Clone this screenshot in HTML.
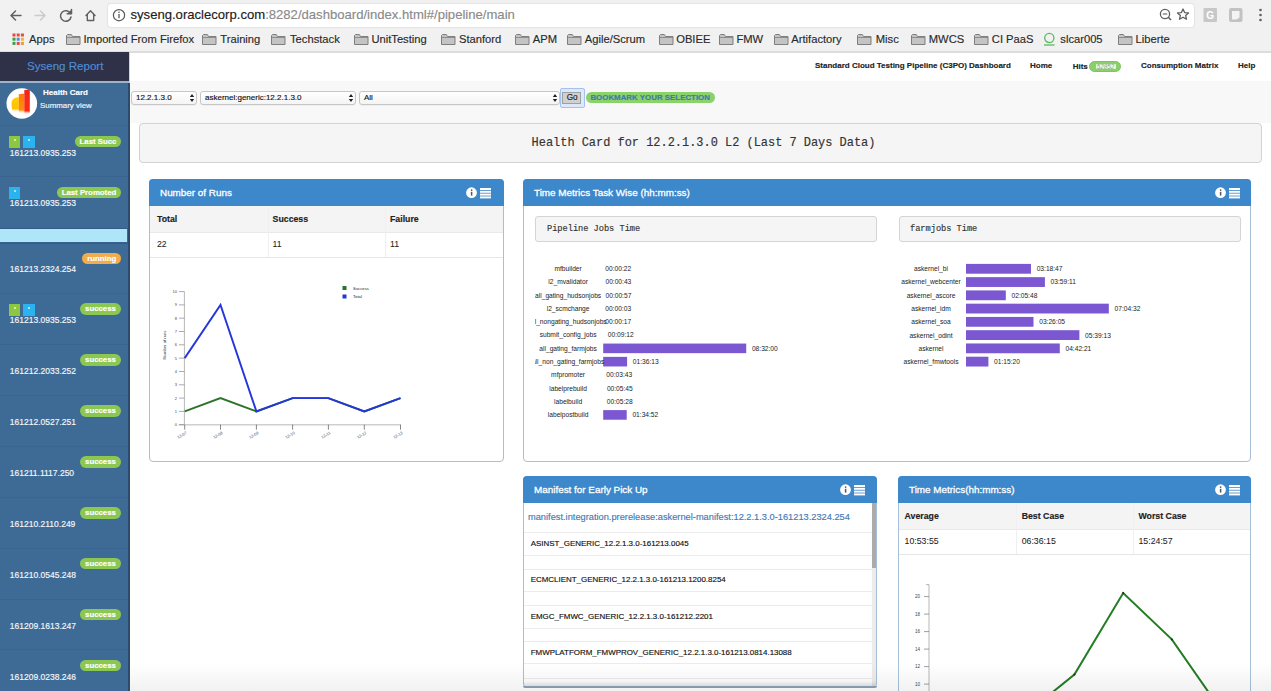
<!DOCTYPE html><html><head><meta charset="utf-8"><style>
*{box-sizing:border-box;margin:0;padding:0}
html,body{width:1271px;height:691px;overflow:hidden;background:#fff;font-family:"Liberation Sans",sans-serif;color:#222}
.a{position:absolute;white-space:nowrap}
.t{position:absolute;white-space:nowrap;line-height:1}
div.a{-webkit-text-stroke:0.15px currentColor}
</style></head><body>
<div class="a" style="left:0px;top:0px;width:1271px;height:51px;background:#f1f1f1"></div>
<div class="a" style="left:0px;top:51px;width:1271px;height:1.7999999999999972px;background:#dcdcdc"></div>
<div class="a" style="left:108px;top:4px;width:1086px;height:23px;background:#fff;border-radius:3px;box-shadow:0 0 0 1px #e4e4e4"></div>
<svg class="a" style="left:0;top:-0.5px" width="130" height="30">
<g fill="none" stroke-linecap="round" stroke-linejoin="round">
<path d="M21 15.5H11M15.5 11L11 15.5L15.5 20" stroke="#616161" stroke-width="1.5"/>
<path d="M35 15.5H45M40.5 11L45 15.5L40.5 20" stroke="#cbcbcb" stroke-width="1.5"/>
<path d="M70.5 13.5A5.3 5.3 0 1 0 71 17" stroke="#616161" stroke-width="1.5"/>
<path d="M71.5 9.5V13.8H67.2" stroke="#616161" stroke-width="1.5" fill="#616161"/>
<path d="M86 15.5L90.5 10.8L95 15.5M87.3 14.2V20.5H93.7V14.2" stroke="#616161" stroke-width="1.4"/>
</g>
<circle cx="119" cy="15.2" r="5.6" fill="none" stroke="#5a5a5a" stroke-width="1.2"/>
<path d="M119 14V18.3" stroke="#5a5a5a" stroke-width="1.3"/><circle cx="119" cy="12.2" r="0.8" fill="#5a5a5a"/>
</svg>
<div class="a" style="left:130.5px;top:7.34px;font-size:13.1px;line-height:15.72px;"><span style="color:#202020">syseng.oraclecorp.com</span><span style="color:#8a8a8a">:8282/dashboard/index.html#/pipeline/main</span></div>
<svg class="a" style="left:1150px;top:0" width="121" height="30">
<circle cx="15" cy="14" r="4.6" fill="none" stroke="#5f5f5f" stroke-width="1.3"/>
<path d="M18.3 17.3L21 20" stroke="#5f5f5f" stroke-width="1.6"/><path d="M12.8 14H17.2" stroke="#5f5f5f" stroke-width="1.1"/>
<path d="M33 9L34.6 12.6L38.5 12.9L35.6 15.4L36.5 19.2L33 17.2L29.5 19.2L30.4 15.4L27.5 12.9L31.4 12.6Z" fill="none" stroke="#5f5f5f" stroke-width="1.3" stroke-linejoin="round"/>
<rect x="53.5" y="8" width="13.5" height="14" fill="#c8c8c8" rx="1"/>
<text x="60.2" y="19" font-size="10" fill="#fff" text-anchor="middle" font-family="Liberation Sans" font-weight="bold">G</text>
<rect x="79" y="8" width="13.5" height="14" fill="#c2c2c2" rx="2"/>
<path d="M82 11H89.5V17.5L86.5 19.5H82Z" fill="#f4f4f4"/>
<circle cx="110.5" cy="10" r="1.3" fill="#5f5f5f"/><circle cx="110.5" cy="15" r="1.3" fill="#5f5f5f"/><circle cx="110.5" cy="20" r="1.3" fill="#5f5f5f"/>
</svg>
<svg class="a" style="left:11px;top:32px" width="16" height="16"><rect x="1.5" y="1.5" width="3" height="3" fill="#e84b3c"/><rect x="5.7" y="1.5" width="3" height="3" fill="#e84b3c"/><rect x="9.9" y="1.5" width="3" height="3" fill="#e84b3c"/><rect x="1.5" y="5.7" width="3" height="3" fill="#3f9d4b"/><rect x="5.7" y="5.7" width="3" height="3" fill="#4a90e2"/><rect x="9.9" y="5.7" width="3" height="3" fill="#f2b533"/><rect x="1.5" y="9.9" width="3" height="3" fill="#3f9d4b"/><rect x="5.7" y="9.9" width="3" height="3" fill="#e84b3c"/><rect x="9.9" y="9.9" width="3" height="3" fill="#f29a33"/></svg>
<div class="a" style="left:29px;top:32.98px;font-size:11.2px;line-height:13.44px;color:#2a2a2a">Apps</div>
<svg class="a" style="left:65.5px;top:33px" width="15" height="13"><path d="M0.5 2.5V11.5H14V3.5H6.5L5.3 1.5H1.5Z" fill="#c4c4c4" stroke="#7f7f7f" stroke-width="1"/><path d="M0.5 4.5H14" stroke="#7f7f7f" stroke-width="0.8"/></svg>
<div class="a" style="left:83.5px;top:32.98px;font-size:11.2px;line-height:13.44px;color:#2a2a2a">Imported From Firefox</div>
<svg class="a" style="left:202px;top:33px" width="15" height="13"><path d="M0.5 2.5V11.5H14V3.5H6.5L5.3 1.5H1.5Z" fill="#c4c4c4" stroke="#7f7f7f" stroke-width="1"/><path d="M0.5 4.5H14" stroke="#7f7f7f" stroke-width="0.8"/></svg>
<div class="a" style="left:220.3px;top:32.98px;font-size:11.2px;line-height:13.44px;color:#2a2a2a">Training</div>
<svg class="a" style="left:271.3px;top:33px" width="15" height="13"><path d="M0.5 2.5V11.5H14V3.5H6.5L5.3 1.5H1.5Z" fill="#c4c4c4" stroke="#7f7f7f" stroke-width="1"/><path d="M0.5 4.5H14" stroke="#7f7f7f" stroke-width="0.8"/></svg>
<div class="a" style="left:290px;top:32.98px;font-size:11.2px;line-height:13.44px;color:#2a2a2a">Techstack</div>
<svg class="a" style="left:353.7px;top:33px" width="15" height="13"><path d="M0.5 2.5V11.5H14V3.5H6.5L5.3 1.5H1.5Z" fill="#c4c4c4" stroke="#7f7f7f" stroke-width="1"/><path d="M0.5 4.5H14" stroke="#7f7f7f" stroke-width="0.8"/></svg>
<div class="a" style="left:371.4px;top:32.98px;font-size:11.2px;line-height:13.44px;color:#2a2a2a">UnitTesting</div>
<svg class="a" style="left:440.7px;top:33px" width="15" height="13"><path d="M0.5 2.5V11.5H14V3.5H6.5L5.3 1.5H1.5Z" fill="#c4c4c4" stroke="#7f7f7f" stroke-width="1"/><path d="M0.5 4.5H14" stroke="#7f7f7f" stroke-width="0.8"/></svg>
<div class="a" style="left:459px;top:32.98px;font-size:11.2px;line-height:13.44px;color:#2a2a2a">Stanford</div>
<svg class="a" style="left:515px;top:33px" width="15" height="13"><path d="M0.5 2.5V11.5H14V3.5H6.5L5.3 1.5H1.5Z" fill="#c4c4c4" stroke="#7f7f7f" stroke-width="1"/><path d="M0.5 4.5H14" stroke="#7f7f7f" stroke-width="0.8"/></svg>
<div class="a" style="left:532.8px;top:32.98px;font-size:11.2px;line-height:13.44px;color:#2a2a2a">APM</div>
<svg class="a" style="left:567px;top:33px" width="15" height="13"><path d="M0.5 2.5V11.5H14V3.5H6.5L5.3 1.5H1.5Z" fill="#c4c4c4" stroke="#7f7f7f" stroke-width="1"/><path d="M0.5 4.5H14" stroke="#7f7f7f" stroke-width="0.8"/></svg>
<div class="a" style="left:584.8px;top:32.98px;font-size:11.2px;line-height:13.44px;color:#2a2a2a">Agile/Scrum</div>
<svg class="a" style="left:658.5px;top:33px" width="15" height="13"><path d="M0.5 2.5V11.5H14V3.5H6.5L5.3 1.5H1.5Z" fill="#c4c4c4" stroke="#7f7f7f" stroke-width="1"/><path d="M0.5 4.5H14" stroke="#7f7f7f" stroke-width="0.8"/></svg>
<div class="a" style="left:676.2px;top:32.98px;font-size:11.2px;line-height:13.44px;color:#2a2a2a">OBIEE</div>
<svg class="a" style="left:718.7px;top:33px" width="15" height="13"><path d="M0.5 2.5V11.5H14V3.5H6.5L5.3 1.5H1.5Z" fill="#c4c4c4" stroke="#7f7f7f" stroke-width="1"/><path d="M0.5 4.5H14" stroke="#7f7f7f" stroke-width="0.8"/></svg>
<div class="a" style="left:736.4px;top:32.98px;font-size:11.2px;line-height:13.44px;color:#2a2a2a">FMW</div>
<svg class="a" style="left:773.6px;top:33px" width="15" height="13"><path d="M0.5 2.5V11.5H14V3.5H6.5L5.3 1.5H1.5Z" fill="#c4c4c4" stroke="#7f7f7f" stroke-width="1"/><path d="M0.5 4.5H14" stroke="#7f7f7f" stroke-width="0.8"/></svg>
<div class="a" style="left:791.3px;top:32.98px;font-size:11.2px;line-height:13.44px;color:#2a2a2a">Artifactory</div>
<svg class="a" style="left:857.3px;top:33px" width="15" height="13"><path d="M0.5 2.5V11.5H14V3.5H6.5L5.3 1.5H1.5Z" fill="#c4c4c4" stroke="#7f7f7f" stroke-width="1"/><path d="M0.5 4.5H14" stroke="#7f7f7f" stroke-width="0.8"/></svg>
<div class="a" style="left:875.8px;top:32.98px;font-size:11.2px;line-height:13.44px;color:#2a2a2a">Misc</div>
<svg class="a" style="left:911.3px;top:33px" width="15" height="13"><path d="M0.5 2.5V11.5H14V3.5H6.5L5.3 1.5H1.5Z" fill="#c4c4c4" stroke="#7f7f7f" stroke-width="1"/><path d="M0.5 4.5H14" stroke="#7f7f7f" stroke-width="0.8"/></svg>
<div class="a" style="left:928.8px;top:32.98px;font-size:11.2px;line-height:13.44px;color:#2a2a2a">MWCS</div>
<svg class="a" style="left:974.2px;top:33px" width="15" height="13"><path d="M0.5 2.5V11.5H14V3.5H6.5L5.3 1.5H1.5Z" fill="#c4c4c4" stroke="#7f7f7f" stroke-width="1"/><path d="M0.5 4.5H14" stroke="#7f7f7f" stroke-width="0.8"/></svg>
<div class="a" style="left:991.8px;top:32.98px;font-size:11.2px;line-height:13.44px;color:#2a2a2a">CI PaaS</div>
<svg class="a" style="left:1117.6px;top:33px" width="15" height="13"><path d="M0.5 2.5V11.5H14V3.5H6.5L5.3 1.5H1.5Z" fill="#c4c4c4" stroke="#7f7f7f" stroke-width="1"/><path d="M0.5 4.5H14" stroke="#7f7f7f" stroke-width="0.8"/></svg>
<div class="a" style="left:1135.5px;top:32.98px;font-size:11.2px;line-height:13.44px;color:#2a2a2a">Liberte</div>
<svg class="a" style="left:1043px;top:32px" width="13" height="15"><circle cx="6.3" cy="6" r="4.6" fill="none" stroke="#59b960" stroke-width="1.3"/><path d="M1 13H11.5" stroke="#59b960" stroke-width="1.3"/></svg>
<div class="a" style="left:1060.3px;top:32.98px;font-size:11.2px;line-height:13.44px;color:#2a2a2a">slcar005</div>
<div class="a" style="left:0px;top:52px;width:129px;height:639px;background:#3e6b95"></div>
<div class="a" style="left:128px;top:83px;width:2px;height:608px;background:#2d4b6c"></div>
<div class="a" style="left:129px;top:52px;width:1px;height:31px;background:#d4d4d4"></div>
<div class="a" style="left:0px;top:52px;width:129px;height:29px;background:#2e3148"></div>
<div class="a" style="left:0px;top:81px;width:129px;height:2px;background:#9db4cb"></div>
<div class="a" style="left:-234.8px;width:600px;text-align:center;top:60.07px;font-size:11.55px;line-height:13.86px;color:#4d8ed6">Syseng Report</div>
<svg class="a" style="left:0px;top:84px" width="44" height="40">
<defs>
<linearGradient id="fy" x1="0" y1="0" x2="0" y2="1"><stop offset="0" stop-color="#ffd000"/><stop offset="0.75" stop-color="#ffc000"/><stop offset="1" stop-color="#fff" stop-opacity="0"/></linearGradient>
<linearGradient id="fo" x1="0" y1="0" x2="0" y2="1"><stop offset="0" stop-color="#ff7a10"/><stop offset="0.8" stop-color="#ff8a10"/><stop offset="1" stop-color="#fff" stop-opacity="0"/></linearGradient>
<linearGradient id="fr" x1="0" y1="0" x2="0" y2="1"><stop offset="0" stop-color="#f02818"/><stop offset="0.85" stop-color="#ff2a10"/><stop offset="1" stop-color="#fff" stop-opacity="0"/></linearGradient>
<filter id="bl"><feGaussianBlur stdDeviation="0.6"/></filter>
</defs>
<circle cx="21.8" cy="103.5" r="15.3" transform="translate(0,-84)" fill="#fff"/>
<g filter="url(#bl)">
<path d="M11.6 18C12.3 15.5 14.5 13.3 18.8 13.3V28.5H13C11.8 25 11.3 21 11.6 18Z" fill="url(#fy)"/>
<path d="M18.8 10.2L24.3 9.5V30H18.8Z" fill="url(#fo)"/>
<path d="M24.3 6L29.8 5.2V30.5L24.3 30.8Z" fill="url(#fr)"/>
</g>
</svg>
<div class="a" style="left:43px;top:88.00px;font-size:8px;line-height:9.60px;color:#fff;font-weight:bold">Health Card</div>
<div class="a" style="left:40px;top:100.66px;font-size:7.9px;line-height:9.48px;color:#f2f6fb">Summary view</div>
<div class="a" style="left:0px;top:125.4px;width:128px;height:1.0px;background:#38648f"></div>
<div class="a" style="left:74.9px;top:135.7px;width:46.3px;height:11.6px;border-radius:6px;background:#8cc751;color:#fff;font-size:7.8px;font-weight:bold;line-height:11.6px;text-align:center">Last Succ</div>
<div class="a" style="left:9px;top:136.2px;width:11.3px;height:12px;background:#8dc63f"><div style="position:absolute;left:4.5px;top:3px;width:2px;height:2px;background:rgba(255,255,255,.8);border-radius:1px"></div></div>
<div class="a" style="left:23.3px;top:136.2px;width:11.3px;height:12px;background:#2ab3ef"><div style="position:absolute;left:4.5px;top:3px;width:2px;height:2px;background:rgba(255,255,255,.8);border-radius:1px"></div></div>
<div class="a" style="left:9.8px;top:147.50px;font-size:8.5px;line-height:10.20px;color:#f4f7fb">161213.0935.253</div>
<div class="a" style="left:0px;top:176.29999999999998px;width:128px;height:1.0px;background:#38648f"></div>
<div class="a" style="left:56.8px;top:186.6px;width:64.4px;height:11.6px;border-radius:6px;background:#8cc751;color:#fff;font-size:7.8px;font-weight:bold;line-height:11.6px;text-align:center">Last Promoted</div>
<div class="a" style="left:9px;top:187.1px;width:11.3px;height:12px;background:#2ab3ef"><div style="position:absolute;left:4.5px;top:3px;width:2px;height:2px;background:rgba(255,255,255,.8);border-radius:1px"></div></div>
<div class="a" style="left:9.8px;top:198.40px;font-size:8.5px;line-height:10.20px;color:#f4f7fb">161213.0935.253</div>
<div class="a" style="left:0px;top:227.7px;width:128px;height:1.0px;background:#325c88"></div>
<div class="a" style="left:0px;top:228.7px;width:127px;height:14.0px;background:#aee5f9"></div>
<div class="a" style="left:0px;top:242.7px;width:128px;height:1.0px;background:#325c88"></div>
<div class="a" style="left:0px;top:242.2px;width:128px;height:1.0px;background:#38648f"></div>
<div class="a" style="left:82.3px;top:252.5px;width:38.9px;height:11.6px;border-radius:6px;background:#f0ad4e;color:#fff;font-size:7.8px;font-weight:bold;line-height:11.6px;text-align:center">running</div>
<div class="a" style="left:9.8px;top:264.30px;font-size:8.5px;line-height:10.20px;color:#f4f7fb">161213.2324.254</div>
<div class="a" style="left:0px;top:293.09999999999997px;width:128px;height:1.0px;background:#38648f"></div>
<div class="a" style="left:79.8px;top:303.4px;width:41.4px;height:11.6px;border-radius:6px;background:#8cc751;color:#fff;font-size:7.8px;font-weight:bold;line-height:11.6px;text-align:center">success</div>
<div class="a" style="left:9px;top:303.9px;width:11.3px;height:12px;background:#8dc63f"><div style="position:absolute;left:4.5px;top:3px;width:2px;height:2px;background:rgba(255,255,255,.8);border-radius:1px"></div></div>
<div class="a" style="left:23.3px;top:303.9px;width:11.3px;height:12px;background:#2ab3ef"><div style="position:absolute;left:4.5px;top:3px;width:2px;height:2px;background:rgba(255,255,255,.8);border-radius:1px"></div></div>
<div class="a" style="left:9.8px;top:315.20px;font-size:8.5px;line-height:10.20px;color:#f4f7fb">161213.0935.253</div>
<div class="a" style="left:0px;top:343.99999999999994px;width:128px;height:1.0px;background:#38648f"></div>
<div class="a" style="left:79.8px;top:354.3px;width:41.4px;height:11.6px;border-radius:6px;background:#8cc751;color:#fff;font-size:7.8px;font-weight:bold;line-height:11.6px;text-align:center">success</div>
<div class="a" style="left:9.8px;top:366.10px;font-size:8.5px;line-height:10.20px;color:#f4f7fb">161212.2033.252</div>
<div class="a" style="left:0px;top:394.8999999999999px;width:128px;height:1.0px;background:#38648f"></div>
<div class="a" style="left:79.8px;top:405.2px;width:41.4px;height:11.6px;border-radius:6px;background:#8cc751;color:#fff;font-size:7.8px;font-weight:bold;line-height:11.6px;text-align:center">success</div>
<div class="a" style="left:9.8px;top:417.00px;font-size:8.5px;line-height:10.20px;color:#f4f7fb">161212.0527.251</div>
<div class="a" style="left:0px;top:445.7999999999999px;width:128px;height:1.0px;background:#38648f"></div>
<div class="a" style="left:79.8px;top:456.1px;width:41.4px;height:11.6px;border-radius:6px;background:#8cc751;color:#fff;font-size:7.8px;font-weight:bold;line-height:11.6px;text-align:center">success</div>
<div class="a" style="left:9.8px;top:467.90px;font-size:8.5px;line-height:10.20px;color:#f4f7fb">161211.1117.250</div>
<div class="a" style="left:0px;top:496.6999999999999px;width:128px;height:1.0px;background:#38648f"></div>
<div class="a" style="left:79.8px;top:507.0px;width:41.4px;height:11.6px;border-radius:6px;background:#8cc751;color:#fff;font-size:7.8px;font-weight:bold;line-height:11.6px;text-align:center">success</div>
<div class="a" style="left:9.8px;top:518.80px;font-size:8.5px;line-height:10.20px;color:#f4f7fb">161210.2110.249</div>
<div class="a" style="left:0px;top:547.5999999999999px;width:128px;height:1.0px;background:#38648f"></div>
<div class="a" style="left:79.8px;top:557.9px;width:41.4px;height:11.6px;border-radius:6px;background:#8cc751;color:#fff;font-size:7.8px;font-weight:bold;line-height:11.6px;text-align:center">success</div>
<div class="a" style="left:9.8px;top:569.70px;font-size:8.5px;line-height:10.20px;color:#f4f7fb">161210.0545.248</div>
<div class="a" style="left:0px;top:598.4999999999999px;width:128px;height:1.0px;background:#38648f"></div>
<div class="a" style="left:79.8px;top:608.8px;width:41.4px;height:11.6px;border-radius:6px;background:#8cc751;color:#fff;font-size:7.8px;font-weight:bold;line-height:11.6px;text-align:center">success</div>
<div class="a" style="left:9.8px;top:620.60px;font-size:8.5px;line-height:10.20px;color:#f4f7fb">161209.1613.247</div>
<div class="a" style="left:0px;top:649.3999999999999px;width:128px;height:1.0px;background:#38648f"></div>
<div class="a" style="left:79.8px;top:659.7px;width:41.4px;height:11.6px;border-radius:6px;background:#8cc751;color:#fff;font-size:7.8px;font-weight:bold;line-height:11.6px;text-align:center">success</div>
<div class="a" style="left:9.8px;top:671.50px;font-size:8.5px;line-height:10.20px;color:#f4f7fb">161209.0238.246</div>
<div class="a" style="left:815px;top:61.00px;font-size:8px;line-height:9.60px;font-weight:bold;color:#222">Standard Cloud Testing Pipeline (C3PO) Dashboard</div>
<div class="a" style="left:1030px;top:61.00px;font-size:8px;line-height:9.60px;font-weight:bold;color:#222">Home</div>
<div class="a" style="left:1072.7px;top:61.50px;font-size:8px;line-height:9.60px;font-weight:bold;color:#222">Hits</div>
<div class="a" style="left:1089.3px;top:61.1px;width:31.5px;height:11.3px;border-radius:6px;background:#8ad06a;border:1px solid #7cc65a"></div>
<div class="a" style="left:1095.7px;top:63.8px;width:19.9px;height:5.2px;background:#e6f9dc;border-radius:1px"></div>
<div class="a" style="left:805.5999999999999px;width:600px;text-align:center;top:62.62px;font-size:6.3px;line-height:7.56px;color:#8aa882;font-style:italic;-webkit-text-stroke:0">52852</div>
<div class="a" style="left:1141px;top:61.00px;font-size:8px;line-height:9.60px;font-weight:bold;color:#222">Consumption Matrix</div>
<div class="a" style="left:1238px;top:61.00px;font-size:8px;line-height:9.60px;font-weight:bold;color:#222">Help</div>
<div class="a" style="left:130px;top:81px;width:1141px;height:42px;background:#f8f8f8"></div>
<div class="a" style="left:131px;top:91px;width:66px;height:13.5px;border:1px solid #c6c6c6;border-radius:3px;background:linear-gradient(#fff,#f4f4f4);box-shadow:0 0.5px 0 rgba(0,0,0,.08)"></div>
<div class="a" style="left:136px;top:93.00px;font-size:8px;line-height:9.60px;color:#111">12.2.1.3.0</div>
<svg class="a" style="left:189px;top:92px" width="6" height="12"><path d="M0.8 5L3 2L5.2 5Z M0.8 7L3 10L5.2 7Z" fill="#222"/></svg>
<div class="a" style="left:200px;top:91px;width:156px;height:13.5px;border:1px solid #c6c6c6;border-radius:3px;background:linear-gradient(#fff,#f4f4f4);box-shadow:0 0.5px 0 rgba(0,0,0,.08)"></div>
<div class="a" style="left:205px;top:93.00px;font-size:8px;line-height:9.60px;color:#111">askernel:generic:12.2.1.3.0</div>
<svg class="a" style="left:348px;top:92px" width="6" height="12"><path d="M0.8 5L3 2L5.2 5Z M0.8 7L3 10L5.2 7Z" fill="#222"/></svg>
<div class="a" style="left:359px;top:91px;width:201px;height:13.5px;border:1px solid #c6c6c6;border-radius:3px;background:linear-gradient(#fff,#f4f4f4);box-shadow:0 0.5px 0 rgba(0,0,0,.08)"></div>
<div class="a" style="left:364px;top:93.00px;font-size:8px;line-height:9.60px;color:#111">All</div>
<svg class="a" style="left:552px;top:92px" width="6" height="12"><path d="M0.8 5L3 2L5.2 5Z M0.8 7L3 10L5.2 7Z" fill="#222"/></svg>
<div class="a" style="left:559.7px;top:88.3px;width:24.899999999999977px;height:19.299999999999997px;background:#dde8f8;border:1.4px solid #a6c0f0;border-radius:2px"></div>
<div class="a" style="left:561.7px;top:91.6px;width:19.8px;height:12.8px;background:#d2cfcf;border:1px solid #99a3a3"></div>
<div class="a" style="left:272.1px;width:600px;text-align:center;top:92.68px;font-size:8.2px;line-height:9.84px;color:#222">Go</div>
<div class="a" style="left:585.6px;top:91.8px;width:129px;height:11.5px;border-radius:6px;background:#8ad26a"></div>
<div class="a" style="left:350.20000000000005px;width:600px;text-align:center;top:92.86px;font-size:7.9px;line-height:9.48px;color:#3f7aa8;font-weight:bold">BOOKMARK YOUR SELECTION</div>
<div class="a" style="left:139px;top:123px;width:1123px;height:40px;background:#f5f5f5;border:1px solid #d2d2d2;border-radius:4px"></div>
<div class="a" style="left:403.5px;width:600px;text-align:center;top:135.63px;font-size:11.95px;line-height:14.34px;font-family:'Liberation Mono',monospace;color:#333">Health Card for 12.2.1.3.0 L2 (Last 7 Days Data)</div>
<div class="a" style="left:149px;top:179px;width:354.5px;height:283px;border:1px solid #a8bfd9;border-radius:4px;background:#fff"></div>
<div class="a" style="left:149px;top:179px;width:354.5px;height:26.5px;background:#3d87cb;border-radius:4px 4px 0 0"></div>
<div class="a" style="left:160px;top:186.66px;font-size:9.9px;line-height:11.88px;color:#fff;-webkit-text-stroke:0.3px #fff">Number of Runs</div>
<svg class="a" style="left:466px;top:187px" width="26" height="12">
<circle cx="5.5" cy="5.7" r="5.4" fill="#fff"/>
<path d="M5.6 4.8V8.6" stroke="#555" stroke-width="1.5"/><circle cx="5.6" cy="3.1" r="0.85" fill="#555"/>
<rect x="14" y="1" width="11" height="2" fill="#fff"/><rect x="14" y="3.8" width="11" height="2" fill="#fff"/>
<rect x="14" y="6.6" width="11" height="2" fill="#fff"/><rect x="14" y="9.4" width="11" height="2" fill="#fff"/>
</svg>
<div class="a" style="left:523px;top:179px;width:728px;height:283px;border:1px solid #a8bfd9;border-radius:4px;background:#fff"></div>
<div class="a" style="left:523px;top:179px;width:728px;height:26.5px;background:#3d87cb;border-radius:4px 4px 0 0"></div>
<div class="a" style="left:534px;top:186.66px;font-size:9.9px;line-height:11.88px;color:#fff;-webkit-text-stroke:0.3px #fff">Time Metrics Task Wise (hh:mm:ss)</div>
<svg class="a" style="left:1215px;top:187px" width="26" height="12">
<circle cx="5.5" cy="5.7" r="5.4" fill="#fff"/>
<path d="M5.6 4.8V8.6" stroke="#555" stroke-width="1.5"/><circle cx="5.6" cy="3.1" r="0.85" fill="#555"/>
<rect x="14" y="1" width="11" height="2" fill="#fff"/><rect x="14" y="3.8" width="11" height="2" fill="#fff"/>
<rect x="14" y="6.6" width="11" height="2" fill="#fff"/><rect x="14" y="9.4" width="11" height="2" fill="#fff"/>
</svg>
<div class="a" style="left:523px;top:476px;width:354px;height:212px;border:1px solid #a8bfd9;border-radius:4px;background:#fff"></div>
<div class="a" style="left:523px;top:476px;width:354px;height:26.5px;background:#3d87cb;border-radius:4px 4px 0 0"></div>
<div class="a" style="left:534px;top:483.66px;font-size:9.9px;line-height:11.88px;color:#fff;-webkit-text-stroke:0.3px #fff">Manifest for Early Pick Up</div>
<svg class="a" style="left:840.3px;top:484px" width="26" height="12">
<circle cx="5.5" cy="5.7" r="5.4" fill="#fff"/>
<path d="M5.6 4.8V8.6" stroke="#555" stroke-width="1.5"/><circle cx="5.6" cy="3.1" r="0.85" fill="#555"/>
<rect x="14" y="1" width="11" height="2" fill="#fff"/><rect x="14" y="3.8" width="11" height="2" fill="#fff"/>
<rect x="14" y="6.6" width="11" height="2" fill="#fff"/><rect x="14" y="9.4" width="11" height="2" fill="#fff"/>
</svg>
<div class="a" style="left:898px;top:476px;width:353px;height:244px;border:1px solid #a8bfd9;border-radius:4px;background:#fff"></div>
<div class="a" style="left:898px;top:476px;width:353px;height:26.5px;background:#3d87cb;border-radius:4px 4px 0 0"></div>
<div class="a" style="left:909px;top:483.66px;font-size:9.9px;line-height:11.88px;color:#fff;-webkit-text-stroke:0.3px #fff">Time Metrics(hh:mm:ss)</div>
<svg class="a" style="left:1215.4px;top:484px" width="26" height="12">
<circle cx="5.5" cy="5.7" r="5.4" fill="#fff"/>
<path d="M5.6 4.8V8.6" stroke="#555" stroke-width="1.5"/><circle cx="5.6" cy="3.1" r="0.85" fill="#555"/>
<rect x="14" y="1" width="11" height="2" fill="#fff"/><rect x="14" y="3.8" width="11" height="2" fill="#fff"/>
<rect x="14" y="6.6" width="11" height="2" fill="#fff"/><rect x="14" y="9.4" width="11" height="2" fill="#fff"/>
</svg>
<div class="a" style="left:150px;top:205.5px;width:352.5px;height:26.19999999999999px;background:#f4f4f4"></div>
<div class="a" style="left:150px;top:231.7px;width:352.5px;height:1.0px;background:#e9e9e9"></div>
<div class="a" style="left:150px;top:256.5px;width:352.5px;height:1.1999999999999886px;background:#e6e6e6"></div>
<div class="a" style="left:267.5px;top:205.5px;width:1.0px;height:51.0px;background:#f0f0f0"></div>
<div class="a" style="left:384.5px;top:205.5px;width:1.0px;height:51.0px;background:#f0f0f0"></div>
<div class="a" style="left:157px;top:213.55px;font-size:8.75px;line-height:10.50px;font-weight:bold;color:#222">Total</div>
<div class="a" style="left:157px;top:239.05px;font-size:8.75px;line-height:10.50px;color:#222;-webkit-text-stroke:0.05px #222">22</div>
<div class="a" style="left:272.6px;top:213.55px;font-size:8.75px;line-height:10.50px;font-weight:bold;color:#222">Success</div>
<div class="a" style="left:272.6px;top:239.05px;font-size:8.75px;line-height:10.50px;color:#222;-webkit-text-stroke:0.05px #222">11</div>
<div class="a" style="left:390px;top:213.55px;font-size:8.75px;line-height:10.50px;font-weight:bold;color:#222">Failure</div>
<div class="a" style="left:390px;top:239.05px;font-size:8.75px;line-height:10.50px;color:#222;-webkit-text-stroke:0.05px #222">11</div>
<div class="a" style="left:899px;top:502.6px;width:351px;height:26.200000000000045px;background:#f4f4f4"></div>
<div class="a" style="left:899px;top:528.8000000000001px;width:351px;height:1.0px;background:#e9e9e9"></div>
<div class="a" style="left:899px;top:553.6px;width:351px;height:1.2000000000000455px;background:#e6e6e6"></div>
<div class="a" style="left:1015.8px;top:502.6px;width:1.0px;height:51.0px;background:#f0f0f0"></div>
<div class="a" style="left:1132.6px;top:502.6px;width:1.0px;height:51.0px;background:#f0f0f0"></div>
<div class="a" style="left:904.6px;top:510.65px;font-size:8.75px;line-height:10.50px;font-weight:bold;color:#222">Average</div>
<div class="a" style="left:904.6px;top:536.15px;font-size:8.75px;line-height:10.50px;color:#222;-webkit-text-stroke:0.05px #222">10:53:55</div>
<div class="a" style="left:1021.7px;top:510.65px;font-size:8.75px;line-height:10.50px;font-weight:bold;color:#222">Best Case</div>
<div class="a" style="left:1021.7px;top:536.15px;font-size:8.75px;line-height:10.50px;color:#222;-webkit-text-stroke:0.05px #222">06:36:15</div>
<div class="a" style="left:1138.5px;top:510.65px;font-size:8.75px;line-height:10.50px;font-weight:bold;color:#222">Worst Case</div>
<div class="a" style="left:1138.5px;top:536.15px;font-size:8.75px;line-height:10.50px;color:#222;-webkit-text-stroke:0.05px #222">15:24:57</div>
<svg class="a" style="left:149px;top:260px" width="354" height="200" font-family="Liberation Sans"><path d="M35.400000000000006 31.600000000000023V164.7" fill="none" stroke="#999" stroke-width="0.7"/><path d="M29.900000000000006 164.7H251.8" fill="none" stroke="#cfcfcf" stroke-width="1.4"/><path d="M29.900000000000006 164.7H35.400000000000006" stroke="#888" stroke-width="0.7"/><text x="27.900000000000006" y="166.2" font-size="4" fill="#444" text-anchor="end">0</text><path d="M29.900000000000006 151.4H35.400000000000006" stroke="#888" stroke-width="0.7"/><text x="27.900000000000006" y="152.9" font-size="4" fill="#444" text-anchor="end">1</text><path d="M29.900000000000006 138.1H35.400000000000006" stroke="#888" stroke-width="0.7"/><text x="27.900000000000006" y="139.6" font-size="4" fill="#444" text-anchor="end">2</text><path d="M29.900000000000006 124.8H35.400000000000006" stroke="#888" stroke-width="0.7"/><text x="27.900000000000006" y="126.3" font-size="4" fill="#444" text-anchor="end">3</text><path d="M29.900000000000006 111.5H35.400000000000006" stroke="#888" stroke-width="0.7"/><text x="27.900000000000006" y="113.0" font-size="4" fill="#444" text-anchor="end">4</text><path d="M29.900000000000006 98.1H35.400000000000006" stroke="#888" stroke-width="0.7"/><text x="27.900000000000006" y="99.6" font-size="4" fill="#444" text-anchor="end">5</text><path d="M29.900000000000006 84.8H35.400000000000006" stroke="#888" stroke-width="0.7"/><text x="27.900000000000006" y="86.3" font-size="4" fill="#444" text-anchor="end">6</text><path d="M29.900000000000006 71.5H35.400000000000006" stroke="#888" stroke-width="0.7"/><text x="27.900000000000006" y="73.0" font-size="4" fill="#444" text-anchor="end">7</text><path d="M29.900000000000006 58.2H35.400000000000006" stroke="#888" stroke-width="0.7"/><text x="27.900000000000006" y="59.7" font-size="4" fill="#444" text-anchor="end">8</text><path d="M29.900000000000006 44.9H35.400000000000006" stroke="#888" stroke-width="0.7"/><text x="27.900000000000006" y="46.4" font-size="4" fill="#444" text-anchor="end">9</text><path d="M29.900000000000006 31.6H35.400000000000006" stroke="#888" stroke-width="0.7"/><text x="27.900000000000006" y="33.1" font-size="4" fill="#444" text-anchor="end">10</text><path d="M35.7 164.7V169.7" stroke="#555" stroke-width="0.7"/><text transform="translate(38.2,173.7) rotate(-30)" font-size="4" fill="#555" text-anchor="end">12-07</text><path d="M71.5 164.7V169.7" stroke="#555" stroke-width="0.7"/><text transform="translate(74.0,173.7) rotate(-30)" font-size="4" fill="#555" text-anchor="end">12-08</text><path d="M107.4 164.7V169.7" stroke="#555" stroke-width="0.7"/><text transform="translate(109.9,173.7) rotate(-30)" font-size="4" fill="#555" text-anchor="end">12-09</text><path d="M143.6 164.7V169.7" stroke="#555" stroke-width="0.7"/><text transform="translate(146.1,173.7) rotate(-30)" font-size="4" fill="#555" text-anchor="end">12-10</text><path d="M179.4 164.7V169.7" stroke="#555" stroke-width="0.7"/><text transform="translate(181.9,173.7) rotate(-30)" font-size="4" fill="#555" text-anchor="end">12-11</text><path d="M215.3 164.7V169.7" stroke="#555" stroke-width="0.7"/><text transform="translate(217.8,173.7) rotate(-30)" font-size="4" fill="#555" text-anchor="end">12-12</text><path d="M251.5 164.7V169.7" stroke="#555" stroke-width="0.7"/><text transform="translate(254.0,173.7) rotate(-30)" font-size="4" fill="#555" text-anchor="end">12-13</text><text transform="translate(16.5,85) rotate(-90)" font-size="4.2" fill="#333" text-anchor="middle">Number of runs</text><polyline points="35.7,151.4 71.5,138.1 107.4,151.4 143.6,138.1 179.4,138.1 215.3,151.4 251.5,138.1" fill="none" stroke="#2b742b" stroke-width="1.9"/><polyline points="35.7,98.1 71.5,44.9 107.4,151.4 143.6,138.1 179.4,138.1 215.3,151.4 251.5,138.1" fill="none" stroke="#2536dc" stroke-width="1.9"/><rect x="193.5" y="26" width="4" height="4" fill="#2b742b"/><text x="204" y="29.600000000000023" font-size="4.2" fill="#222">Success</text><rect x="193.5" y="34.5" width="4" height="4" fill="#2536dc"/><text x="204" y="38" font-size="4.2" fill="#222">Total</text></svg>
<div class="a" style="left:535px;top:216px;width:342px;height:25.5px;background:#f5f5f5;border:1px solid #d4d4d4;border-radius:3px"></div>
<div class="a" style="left:547px;top:224.11px;font-size:8.65px;line-height:10.38px;font-family:'Liberation Mono',monospace;color:#333">Pipeline Jobs Time</div>
<div class="a" style="left:898.5px;top:216px;width:342.0999999999999px;height:25.5px;background:#f5f5f5;border:1px solid #d4d4d4;border-radius:3px"></div>
<div class="a" style="left:910px;top:224.31px;font-size:8.65px;line-height:10.38px;font-family:'Liberation Mono',monospace;color:#333">farmjobs Time</div>
<svg class="a" style="left:534.5px;top:255px" width="300" height="175" font-family="Liberation Sans"><text x="33.10" y="15.90" font-size="6.65" fill="#222" text-anchor="middle">mfbuilder</text><text x="70.34" y="15.90" font-size="6.65" fill="#222">00:00:22</text><text x="33.10" y="29.21" font-size="6.65" fill="#222" text-anchor="middle">l2_mvalidator</text><text x="70.44" y="29.21" font-size="6.65" fill="#222">00:00:43</text><text x="33.10" y="42.52" font-size="6.65" fill="#222" text-anchor="middle">all_gating_hudsonjobs</text><text x="70.50" y="42.52" font-size="6.65" fill="#222">00:00:57</text><text x="33.10" y="55.83" font-size="6.65" fill="#222" text-anchor="middle">l2_scmchange</text><text x="70.24" y="55.83" font-size="6.65" fill="#222">00:00:03</text><text x="33.10" y="69.14" font-size="6.65" fill="#222" text-anchor="middle">all_nongating_hudsonjobs</text><text x="70.31" y="69.14" font-size="6.65" fill="#222">00:00:17</text><text x="33.10" y="82.45" font-size="6.65" fill="#222" text-anchor="middle">submit_config_jobs</text><text x="72.87" y="82.45" font-size="6.65" fill="#222">00:09:12</text><rect x="68.20" y="88.56" width="143.02" height="9.6" fill="#7b57d1"/><text x="33.10" y="95.76" font-size="6.65" fill="#222" text-anchor="middle">all_gating_farmjobs</text><text x="216.92" y="95.76" font-size="6.65" fill="#222">08:32:00</text><rect x="68.20" y="101.87" width="23.90" height="9.6" fill="#7b57d1"/><text x="33.10" y="109.07" font-size="6.65" fill="#222" text-anchor="middle">all_non_gating_farmjobs</text><text x="97.80" y="109.07" font-size="6.65" fill="#222">01:36:13</text><text x="33.10" y="122.38" font-size="6.65" fill="#222" text-anchor="middle">mfpromoter</text><text x="71.29" y="122.38" font-size="6.65" fill="#222">00:03:43</text><text x="33.10" y="135.69" font-size="6.65" fill="#222" text-anchor="middle">labelprebuild</text><text x="71.88" y="135.69" font-size="6.65" fill="#222">00:05:45</text><text x="33.10" y="149.00" font-size="6.65" fill="#222" text-anchor="middle">labelbuild</text><text x="71.80" y="149.00" font-size="6.65" fill="#222">00:05:28</text><rect x="68.20" y="155.11" width="23.51" height="9.6" fill="#7b57d1"/><text x="33.10" y="162.31" font-size="6.65" fill="#222" text-anchor="middle">labelpostbuild</text><text x="97.41" y="162.31" font-size="6.65" fill="#222">01:34:52</text></svg>
<svg class="a" style="left:890px;top:255px" width="300" height="120" font-family="Liberation Sans"><rect x="76.00" y="8.90" width="64.97" height="9.8" fill="#7b57d1"/><text x="41.00" y="16.20" font-size="6.65" fill="#222" text-anchor="middle">askernel_bi</text><text x="146.67" y="16.20" font-size="6.65" fill="#222">03:18:47</text><rect x="76.00" y="22.16" width="78.90" height="9.8" fill="#7b57d1"/><text x="41.00" y="29.46" font-size="6.65" fill="#222" text-anchor="middle">askernel_webcenter</text><text x="160.60" y="29.46" font-size="6.65" fill="#222">03:59:11</text><rect x="76.00" y="35.42" width="39.81" height="9.8" fill="#7b57d1"/><text x="41.00" y="42.72" font-size="6.65" fill="#222" text-anchor="middle">askernel_ascore</text><text x="121.51" y="42.72" font-size="6.65" fill="#222">02:05:48</text><rect x="76.00" y="48.68" width="142.81" height="9.8" fill="#7b57d1"/><text x="41.00" y="55.98" font-size="6.65" fill="#222" text-anchor="middle">askernel_idm</text><text x="224.51" y="55.98" font-size="6.65" fill="#222">07:04:32</text><rect x="76.00" y="61.94" width="67.49" height="9.8" fill="#7b57d1"/><text x="41.00" y="69.24" font-size="6.65" fill="#222" text-anchor="middle">askernel_soa</text><text x="149.19" y="69.24" font-size="6.65" fill="#222">03:26:05</text><rect x="76.00" y="75.20" width="113.39" height="9.8" fill="#7b57d1"/><text x="41.00" y="82.50" font-size="6.65" fill="#222" text-anchor="middle">askernel_odint</text><text x="195.09" y="82.50" font-size="6.65" fill="#222">05:39:13</text><rect x="76.00" y="88.46" width="93.78" height="9.8" fill="#7b57d1"/><text x="41.00" y="95.76" font-size="6.65" fill="#222" text-anchor="middle">askernel</text><text x="175.48" y="95.76" font-size="6.65" fill="#222">04:42:21</text><rect x="76.00" y="101.72" width="22.40" height="9.8" fill="#7b57d1"/><text x="41.00" y="109.02" font-size="6.65" fill="#222" text-anchor="middle">askernel_fmwtools</text><text x="104.10" y="109.02" font-size="6.65" fill="#222">01:15:20</text></svg>
<div class="a" style="left:528px;top:512.44px;font-size:9.27px;line-height:11.12px;color:#437ab8">manifest.integration.prerelease:askernel-manifest:12.2.1.3.0-161213.2324.254</div>
<div class="a" style="left:524px;top:532.2px;width:348px;height:1.0px;background:#ececec"></div>
<div class="a" style="left:524px;top:555px;width:348px;height:1px;background:#ececec"></div>
<div class="a" style="left:524px;top:568.5px;width:348px;height:1.0px;background:#ececec"></div>
<div class="a" style="left:524px;top:591.4px;width:348px;height:1.0px;background:#ececec"></div>
<div class="a" style="left:524px;top:605px;width:348px;height:1px;background:#ececec"></div>
<div class="a" style="left:524px;top:628px;width:348px;height:1px;background:#ececec"></div>
<div class="a" style="left:524px;top:641px;width:348px;height:1px;background:#ececec"></div>
<div class="a" style="left:524px;top:663.3px;width:348px;height:1.0px;background:#ececec"></div>
<div class="a" style="left:524px;top:677.5px;width:348px;height:1.0px;background:#ececec"></div>
<div class="a" style="left:530.7px;top:539.13px;font-size:7.95px;line-height:9.54px;color:#111">ASINST_GENERIC_12.2.1.3.0-161213.0045</div>
<div class="a" style="left:530.7px;top:575.43px;font-size:7.95px;line-height:9.54px;color:#111">ECMCLIENT_GENERIC_12.2.1.3.0-161213.1200.8254</div>
<div class="a" style="left:530.7px;top:611.73px;font-size:7.95px;line-height:9.54px;color:#111">EMGC_FMWC_GENERIC_12.2.1.3.0-161212.2201</div>
<div class="a" style="left:530.7px;top:648.03px;font-size:7.95px;line-height:9.54px;color:#111">FMWPLATFORM_FMWPROV_GENERIC_12.2.1.3.0-161213.0814.13088</div>
<div class="a" style="left:871.5px;top:503px;width:4.7999999999999545px;height:183px;background:#ececec"></div>
<div class="a" style="left:524px;top:681px;width:352px;height:6px;background:linear-gradient(rgba(0,0,0,0),rgba(0,0,0,0.12))"></div>
<div class="a" style="left:523px;top:686px;width:354px;height:2px;background:#8ea2b6;border-radius:0 0 4px 4px"></div>
<div class="a" style="left:872.3px;top:503px;width:4.0px;height:64.60000000000002px;background:#ababab"></div>
<svg class="a" style="left:899px;top:554px" width="351" height="140" font-family="Liberation Sans"><path d="M27 30.600000000000023H30V146" fill="none" stroke="#999" stroke-width="0.7"/><path d="M25 42.6H30" stroke="#777" stroke-width="0.7"/><text x="21" y="44.2" font-size="4.6" fill="#444" text-anchor="end">20</text><path d="M25 60.1H30" stroke="#777" stroke-width="0.7"/><text x="21" y="61.7" font-size="4.6" fill="#444" text-anchor="end">18</text><path d="M25 77.6H30" stroke="#777" stroke-width="0.7"/><text x="21" y="79.2" font-size="4.6" fill="#444" text-anchor="end">16</text><path d="M25 95.1H30" stroke="#777" stroke-width="0.7"/><text x="21" y="96.7" font-size="4.6" fill="#444" text-anchor="end">14</text><path d="M25 112.6H30" stroke="#777" stroke-width="0.7"/><text x="21" y="114.2" font-size="4.6" fill="#444" text-anchor="end">12</text><path d="M25 130.1H30" stroke="#777" stroke-width="0.7"/><text x="21" y="131.7" font-size="4.6" fill="#444" text-anchor="end">10</text><polyline points="126.6,160.0 175.4,120.5 224.2,39.0 272.8,85.4 321.6,155.5" fill="none" stroke="#237d23" stroke-width="2"/><circle cx="126.6" cy="160.0" r="1" fill="#222"/><circle cx="175.4" cy="120.5" r="1" fill="#222"/><circle cx="224.2" cy="39.0" r="1" fill="#222"/><circle cx="272.8" cy="85.4" r="1" fill="#222"/><circle cx="321.6" cy="155.5" r="1" fill="#222"/></svg>
<div class="a" style="left:130px;top:663px;width:1141px;height:28px;background:linear-gradient(rgba(0,0,0,0),rgba(0,0,0,0.047) 85%,rgba(0,0,0,0.05))"></div>
</body></html>
